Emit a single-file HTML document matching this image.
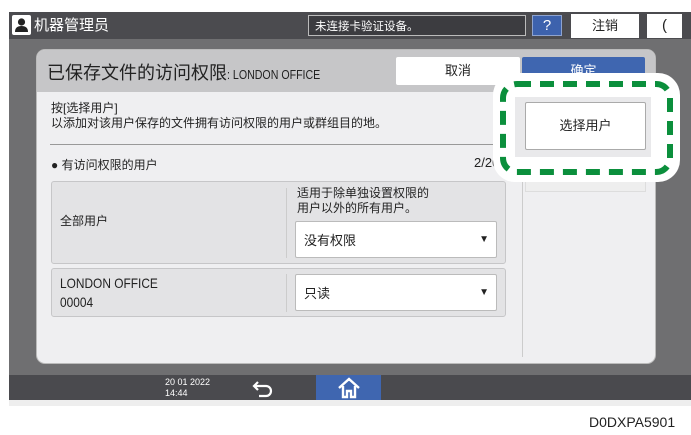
<!DOCTYPE html>
<html><head><meta charset="utf-8"><style>
*{margin:0;padding:0;box-sizing:border-box}
body{width:691px;height:435px;background:#fff;position:relative;overflow:hidden;font-family:"Liberation Sans","Noto Sans CJK SC",sans-serif;color:#222}
.a{position:absolute}
</style></head><body>
<div class="a" style="left:9px;top:12px;width:682px;height:388px;background:#6f6f71"></div>
<div class="a" style="left:9px;top:12px;width:682px;height:27px;background:#4b4b4f"></div>
<div class="a" style="left:12px;top:15px;width:19px;height:20px;background:#fff;border-radius:2px"><svg width="19" height="20"><circle cx="9.5" cy="7" r="3.6" fill="#222"/><path d="M3 17 Q3 11 9.5 11 Q16 11 16 17Z" fill="#222"/></svg></div>
<div class="a" style="left:34px;top:14px;color:#fff;font-size:15px">机器管理员</div>
<div class="a" style="left:308px;top:15px;width:218px;height:21px;border:1px solid #bbb;background:#3c3c40;color:#fff;font-size:11.5px;padding:2px 6px">未连接卡验证设备。</div>
<div class="a" style="left:532px;top:15px;width:30px;height:21px;background:#3d62ad;border:1px solid #8ea3cf;color:#fff;font-size:15px;text-align:center;line-height:19px">?</div>
<div class="a" style="left:571px;top:14px;width:68px;height:24px;background:#fff;font-size:13px;text-align:center;line-height:24px">注销</div>
<div class="a" style="left:647px;top:14px;width:35px;height:24px;background:#fff;font-size:15px;text-align:center;line-height:24px">(</div>

<div class="a" style="left:37px;top:50px;width:618px;height:313px;background:#efeff1;border-radius:8px;overflow:hidden;box-shadow:0 0 0 1px #bbb">
<div class="a" style="left:0;top:0;width:618px;height:42px;background:#c6c6c8"></div>
</div>
<div class="a" style="left:47px;top:59px;font-size:18px">已保存文件的访问权限<span style="font-size:12.5px;display:inline-block;transform:scaleX(.85);transform-origin:left"> : LONDON OFFICE</span></div>
<div class="a" style="left:396px;top:57px;width:124px;height:28px;background:#fff;border-radius:2px;font-size:13px;text-align:center;line-height:28px">取消</div>
<div class="a" style="left:522px;top:57px;width:123px;height:28px;background:#3f66b0;border-radius:2px;color:#fff;font-size:13px;text-align:center;line-height:28px">确定</div>

<div class="a" style="left:51px;top:101px;font-size:12px;line-height:15px">按[选择用户]<br>以添加对该用户保存的文件拥有访问权限的用户或群组目的地。</div>
<div class="a" style="left:50px;top:144px;width:455px;height:1px;background:#999"></div>
<div class="a" style="left:51px;top:156px;font-size:12px">● 有访问权限的用户</div>
<div class="a" style="left:474px;top:155px;font-size:13px">2/20</div>

<div class="a" style="left:51px;top:181px;width:455px;height:83px;background:#e3e3e5;border:1px solid #c6c6c8;border-radius:3px"></div>
<div class="a" style="left:60px;top:212px;font-size:12px">全部用户</div>
<div class="a" style="left:286px;top:188px;width:1px;height:70px;background:#ccc"></div>
<div class="a" style="left:297px;top:186px;font-size:12px;line-height:15px">适用于除单独设置权限的<br>用户以外的所有用户。</div>
<div class="a" style="left:295px;top:221px;width:202px;height:37px;background:#fff;border:1px solid #bbb;border-radius:2px;font-size:13px;padding:8px 8px">没有权限<span style="position:absolute;right:7px;top:12px;font-size:10px">▼</span></div>

<div class="a" style="left:51px;top:268px;width:455px;height:49px;background:#e3e3e5;border:1px solid #c6c6c8;border-radius:3px"></div>
<div class="a" style="left:60px;top:274px;font-size:14px;line-height:19px;transform:scaleX(.85);transform-origin:left">LONDON OFFICE<br>00004</div>
<div class="a" style="left:286px;top:274px;width:1px;height:38px;background:#ccc"></div>
<div class="a" style="left:295px;top:274px;width:202px;height:37px;background:#fff;border:1px solid #bbb;border-radius:2px;font-size:13px;padding:8px 8px">只读<span style="position:absolute;right:7px;top:12px;font-size:10px">▼</span></div>

<div class="a" style="left:522px;top:95px;width:1px;height:262px;background:#ccc"></div>
<div class="a" style="left:525px;top:178px;width:121px;height:14px;background:#eee;border:1px solid #ddd"></div>

<div class="a" style="left:493px;top:73px;width:187px;height:109px;background:#fff;border-radius:22px"></div>
<div class="a" style="left:515px;top:97px;width:136px;height:60px;background:#e9e9eb"></div>
<div class="a" style="left:525px;top:102px;width:121px;height:48px;background:#fff;border:1px solid #aaa;border-radius:2px;font-size:13px;text-align:center;line-height:46px">选择用户</div>
<svg class="a" style="left:493px;top:73px" width="187" height="109"><rect x="10" y="11" width="167" height="88" rx="14" fill="none" stroke="#0b8f3c" stroke-width="6" stroke-dasharray="14 9"/></svg>

<div class="a" style="left:9px;top:375px;width:682px;height:25px;background:#4a4a4e"></div>
<div class="a" style="left:165px;top:377px;color:#fff;font-size:9px;line-height:11px">20 01 2022<br>14:44</div>
<svg class="a" style="left:250px;top:377px" width="25" height="22"><path d="M8 5 L4 9 L8 13 M4 9 H16 A5 5 0 0 1 16 19 H9" fill="none" stroke="#fff" stroke-width="2.2"/></svg>
<div class="a" style="left:316px;top:375px;width:65px;height:25px;background:#3f66b0"></div>
<svg class="a" style="left:336px;top:376px" width="26" height="24"><path d="M3 12 L13 3 L23 12 M7 10 V21 H11 V15 H15 V21 H19 V10" fill="none" stroke="#fff" stroke-width="2.4"/></svg>
<div class="a" style="left:9px;top:400px;width:682px;height:6px;background:#eee"></div>
<div class="a" style="left:589px;top:414px;font-size:14px;color:#222">D0DXPA5901</div>
</body></html>
